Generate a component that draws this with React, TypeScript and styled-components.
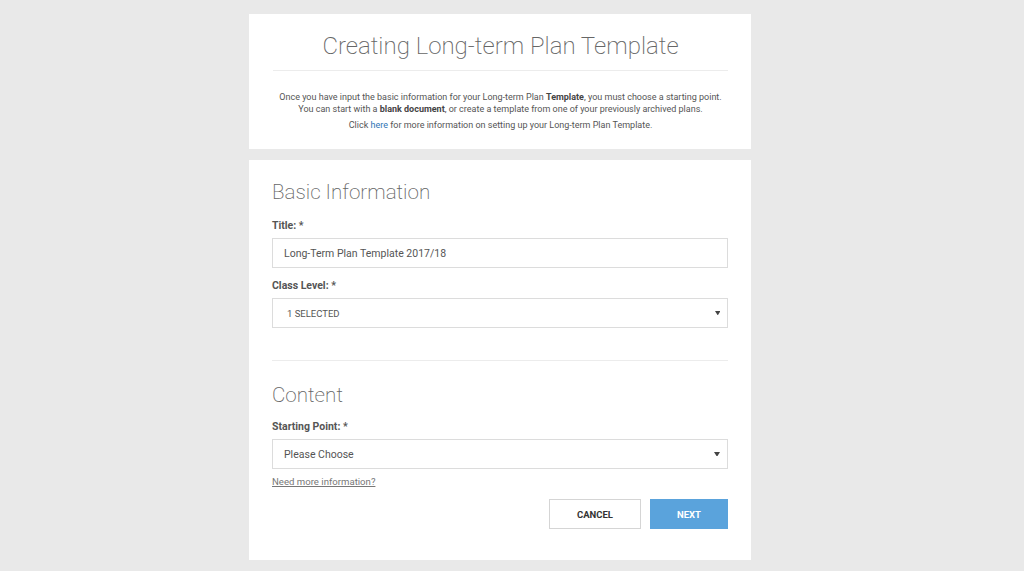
import React from "react";
import styled, { createGlobalStyle } from "styled-components";

const GlobalStyle = createGlobalStyle`
  html, body { margin: 0; padding: 0; background: #e9e9e9; }
  body { font-family: Roboto, "Liberation Sans", Arial, sans-serif; color: #555; }
  * { box-sizing: border-box; }
`;

const Page = styled.div`
  width: 502px;
  margin: 14px 0 0 249px;
  display: flex;
  flex-direction: column;
  gap: 11px;
`;

const Card = styled.section<{ $pad: string }>`
  background: #fff;
  padding: ${(p) => p.$pad};
  display: flex;
  flex-direction: column;
`;

const PageTitle = styled.h1`
  margin: 0;
  font-weight: 200;
  font-size: 24px;
  line-height: 29px;
  text-align: center;
  color: #666;
`;

const Rule = styled.hr<{ $mt: number; $mb: number }>`
  border: 0;
  border-top: 1px solid #ececec;
  margin: ${(p) => p.$mt}px 0 ${(p) => p.$mb}px;
  width: 100%;
`;

const Intro = styled.p<{ $mt?: number }>`
  margin: ${(p) => p.$mt ?? 0}px 0 0;
  font-size: 9px;
  line-height: 12px;
  text-align: center;
  color: #555;
  b { font-weight: 700; color: #444; }
  a { color: #2f74b5; text-decoration: none; }
`;

const SectionTitle = styled.h2<{ $mt: number }>`
  margin: ${(p) => p.$mt}px 0 0;
  font-weight: 200;
  font-size: 20.6px;
  line-height: 24px;
  color: #666;
`;

const Label = styled.label<{ $mt: number }>`
  display: block;
  margin: ${(p) => p.$mt}px 0 5px;
  font-size: 10.5px;
  line-height: 14px;
  font-weight: 700;
  color: #555;
`;

const Field = styled.div<{ $caps?: boolean }>`
  height: 30px;
  border: 1px solid #dcdcdc;
  display: flex;
  align-items: center;
  justify-content: space-between;
  padding: 0 7px 0 ${(p) => (p.$caps ? 14 : 11)}px;
  font-size: ${(p) => (p.$caps ? "9.5px" : "10.5px")};
  text-transform: ${(p) => (p.$caps ? "uppercase" : "none")};
  color: #555;
  background: #fff;
`;

const Caret = ({ w }: { w: number }) => (
  <svg width={w} height={w * 0.8} viewBox="0 0 10 8">
    <path d="M0 0 H10 L5 8 Z" fill="#444" />
  </svg>
);

const HelpLink = styled.a`
  display: block;
  margin-top: 7px;
  font-size: 9.6px;
  line-height: 12px;
  color: #777;
  text-decoration: underline;
`;

const Actions = styled.div`
  margin-top: 11px;
  display: flex;
  justify-content: flex-end;
  gap: 9px;
`;

const Button = styled.button<{ $primary?: boolean; $w: number }>`
  width: ${(p) => p.$w}px;
  height: 30px;
  border: 1px solid ${(p) => (p.$primary ? "#5aa3dc" : "#d5d5d5")};
  background: ${(p) => (p.$primary ? "#5aa3dc" : "#fff")};
  color: ${(p) => (p.$primary ? "#fff" : "#333")};
  font-family: Roboto, "Liberation Sans", Arial, sans-serif;
  font-weight: 700;
  font-size: 9.5px;
  text-transform: uppercase;
  padding: 0;
`;

export default function App() {
  return (
    <>
      <GlobalStyle />
      <Page>
        <Card $pad="18px 23px 18px 24px">
          <PageTitle>Creating Long-term Plan Template</PageTitle>
          <Rule $mt={9} $mb={20} />
          <Intro>
            Once you have input the basic information for your Long-term Plan <b>Template</b>, you must choose a starting point.
            <br />
            You can start with a <b>blank document</b>, or create a template from one of your previously archived plans.
          </Intro>
          <Intro $mt={4}>
            Click <a href="#">here</a> for more information on setting up your Long-term Plan Template.
          </Intro>
        </Card>
        <Card $pad="20px 23px 31px 23px">
          <SectionTitle $mt={0}>Basic Information</SectionTitle>
          <Label $mt={15}>Title: *</Label>
          <Field>Long-Term Plan Template 2017/18</Field>
          <Label $mt={11}>Class Level: *</Label>
          <Field $caps>
            <span>1 Selected</span>
            <Caret w={5.5} />
          </Field>
          <Rule $mt={32} $mb={0} />
          <SectionTitle $mt={22}>Content</SectionTitle>
          <Label $mt={13}>Starting Point: *</Label>
          <Field>
            <span>Please Choose</span>
            <Caret w={6} />
          </Field>
          <HelpLink href="#">Need more information?</HelpLink>
          <Actions>
            <Button $w={92}>Cancel</Button>
            <Button $primary $w={78}>Next</Button>
          </Actions>
        </Card>
      </Page>
    </>
  );
}
